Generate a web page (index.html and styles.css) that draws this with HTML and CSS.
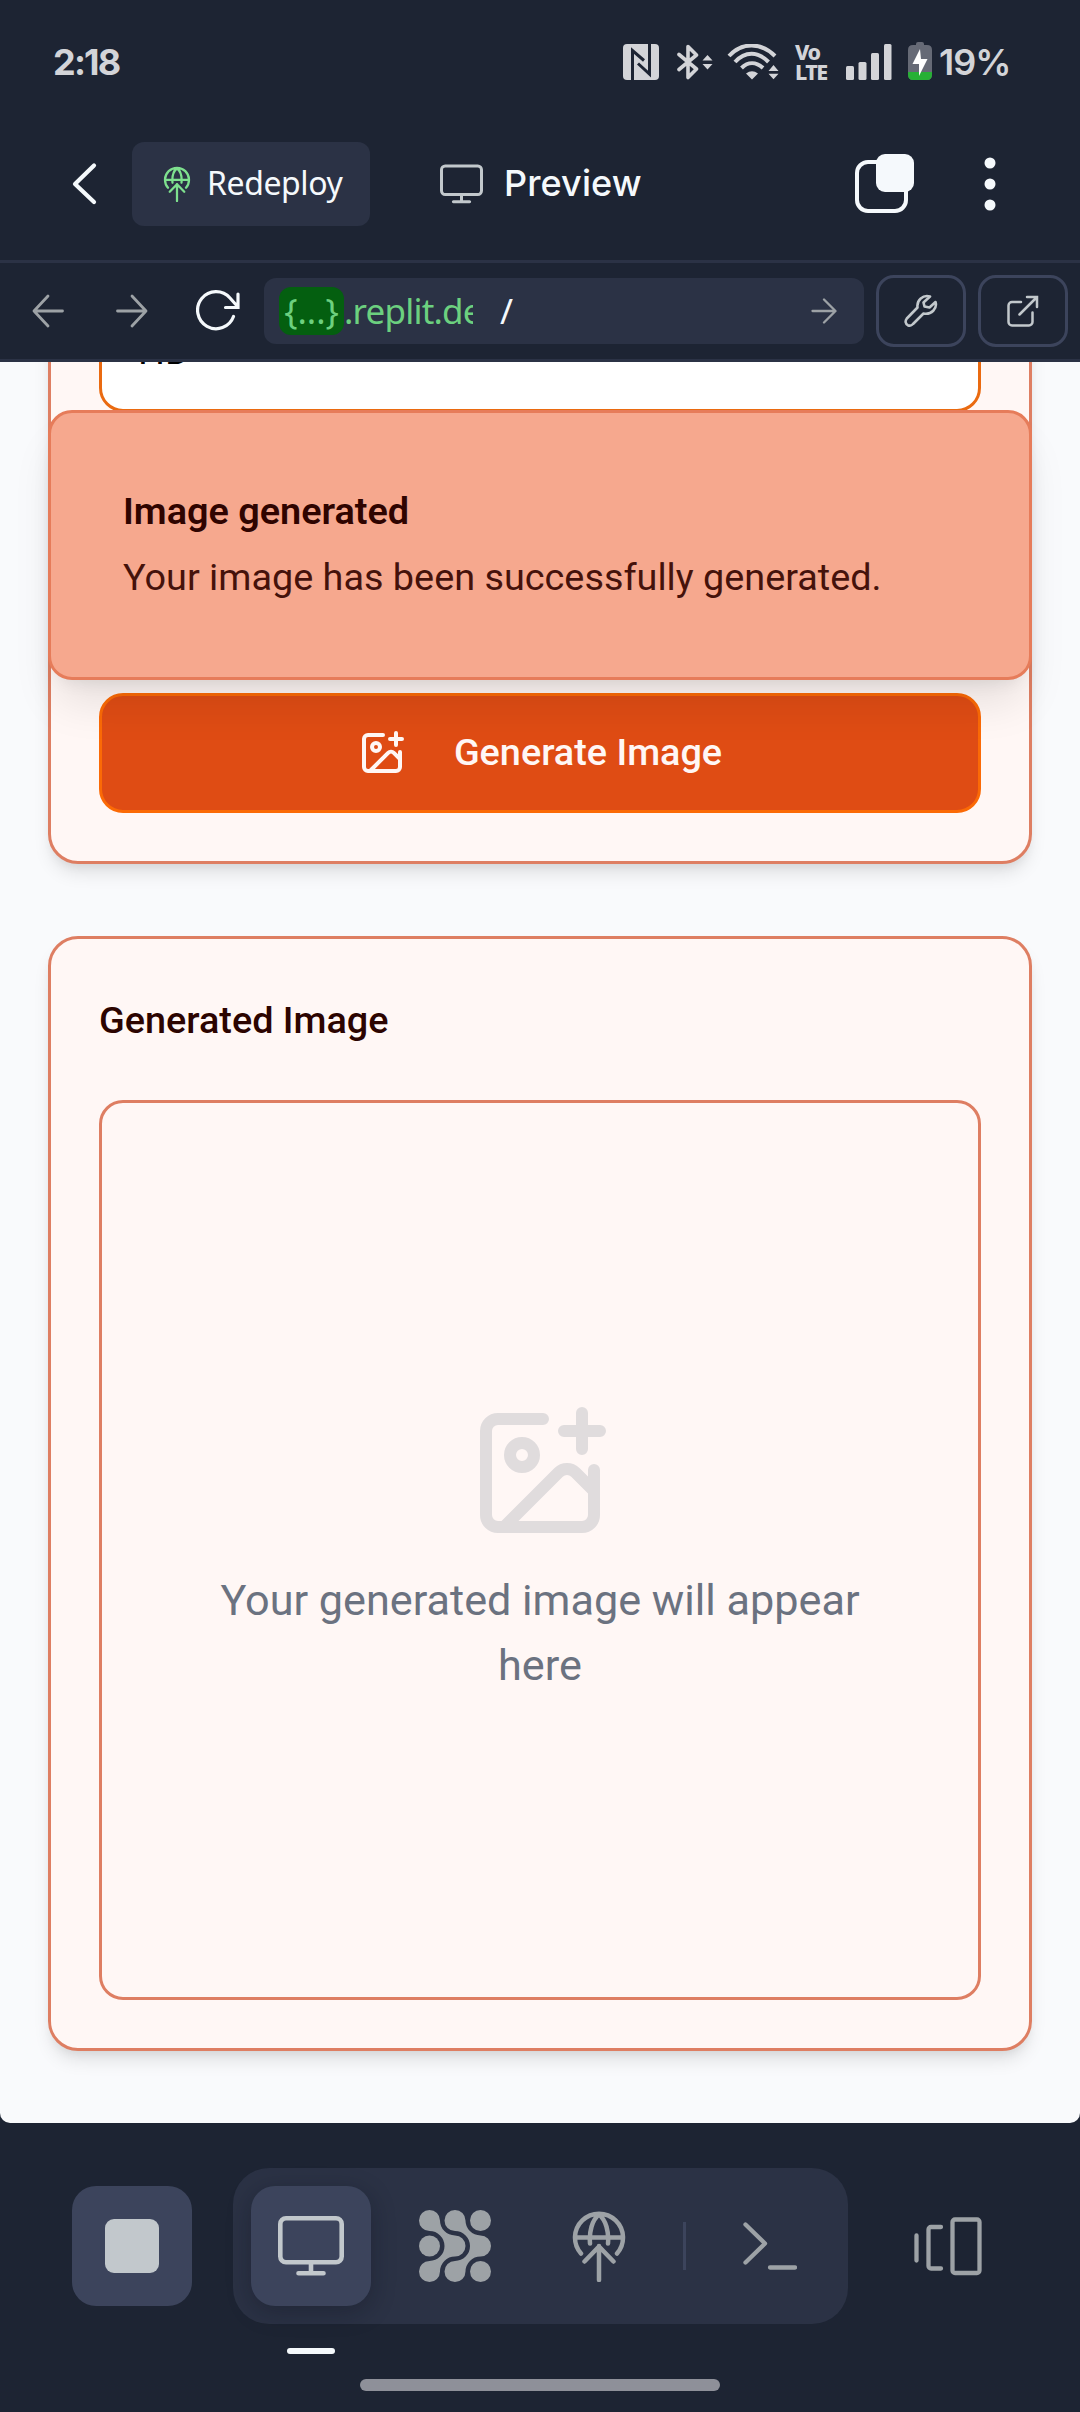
FILE: index.html
```html
<!DOCTYPE html>
<html lang="en">
<head>
<meta charset="utf-8">
<title>Preview</title>
<link rel="stylesheet" href="styles.css">
</head>
<body>
<svg class="defs" width="0" height="0" aria-hidden="true">
  <symbol id="i-globe" viewBox="0 0 72 72">
    <path d="M18 43.5A24 24 0 1 1 54 43.5M12 27.500h48M27 33.500C26 22 29 10 36 4.500C43 10 46 22 45 33.500M36 70V36M21.500 51.500 36 36.500 50.500 51.500" fill="none" stroke="currentColor" stroke-width="4.500" stroke-linecap="round" stroke-linejoin="round"/>
  </symbol>
  <symbol id="i-monitor" viewBox="0 0 66 60">
    <path d="M8 2.300h50a5.700 5.700 0 0 1 5.700 5.700v32.500a5.700 5.700 0 0 1-5.700 5.700H8a5.700 5.700 0 0 1-5.700-5.700V8a5.700 5.700 0 0 1 5.700-5.700zM33 46.500v9M20.500 57.300h25" fill="none" stroke="currentColor" stroke-width="4.600" stroke-linecap="round"/>
  </symbol>
  <symbol id="i-image-plus" viewBox="0 0 24 24">
    <path d="M16 5h6M19 2v6M21 11.500V19a2 2 0 0 1-2 2H5a2 2 0 0 1-2-2V5a2 2 0 0 1 2-2h7.500M21 15l-3.086-3.086a2 2 0 0 0-2.828 0L6 21" fill="none" stroke="currentColor" stroke-width="2" stroke-linecap="round" stroke-linejoin="round"/>
    <circle cx="9" cy="9" r="2" fill="none" stroke="currentColor" stroke-width="2"/>
  </symbol>
</svg>

<header class="status">
  <span class="clock">2:18</span>
  <div class="indicators">
    <svg class="nfc" width="36" height="36" viewBox="0 0 36 36"><rect width="36" height="36" rx="4" fill="#d3d4d8"/><path d="M9.500 36V6.500L21 16.500M26.500 0V30L15 19.500" fill="none" stroke="#1d2433" stroke-width="3"/></svg>
    <svg class="bt" width="36" height="36" viewBox="0 0 36 36"><path d="M2 10.500 19.500 25 11 33.500V2.500L19.500 11 2 25.500" fill="none" stroke="#d3d4d8" stroke-width="3.600" stroke-linejoin="round" stroke-linecap="round"/><path d="M25.500 16.500 30.500 11l5 5.500zM25.500 20h10l-5 5.500z" fill="#d3d4d8"/></svg>
    <svg class="wifi" width="52" height="36" viewBox="0 0 52 36"><path d="M2 12C15-2 34-2 48 12M8 18C18 7 31 7 41.500 18M14.500 24C21 17.500 29 17.500 36 24" fill="none" stroke="#d3d4d8" stroke-width="4"/><path d="M25 35.500 19 29.500Q25 25 31 29.500zM41.500 27 46.500 21l5 6zM41.500 29.700h10l-5 5.500z" fill="#d3d4d8"/></svg>
    <span class="volte"><span>Vo</span><span>LTE</span></span>
    <svg class="signal" width="46" height="36" viewBox="0 0 46 36" fill="#d3d4d8"><rect y="22" width="8" height="14" rx="1.500"/><rect x="12.500" y="18" width="8" height="18" rx="1.500"/><rect x="25" y="9" width="8" height="27" rx="1.500"/><rect x="38" width="7.500" height="36" rx="1.500"/></svg>
    <svg class="battery" width="24" height="38" viewBox="0 0 24 38"><path d="M8 2q0-2 2-2h4q2 0 2 2v1H19q5 0 5 5V32q0 6-5 6H5q-5 0-5-6V8q0-5 5-5h3z" fill="#666a76"/><path d="M0 30H24V32q0 6-5 6H5q-5 0-5-6z" fill="#27b035"/><path d="M12 7 4.500 22H11v12L19.500 17H13z" fill="#fff"/></svg>
    <span class="percent">19%</span>
  </div>
</header>

<nav class="titlebar">
  <svg class="back" width="26" height="44" viewBox="0 0 26 44"><path d="M22 3.500 3 22 22 40" fill="none" stroke="#f5f9fc" stroke-width="4.200" stroke-linecap="round" stroke-linejoin="round"/></svg>
  <button class="redeploy">
    <svg class="globe" width="36" height="36"><use href="#i-globe"/></svg>
    <span>Redeploy</span>
  </button>
  <div class="title">
    <svg width="43" height="40"><use href="#i-monitor"/></svg>
    <span>Preview</span>
  </div>
  <svg class="tabs" width="60" height="60" viewBox="0 0 60 60"><rect x="2" y="8" width="49" height="49" rx="11" fill="none" stroke="#f5f9fc" stroke-width="4"/><rect x="21" y="0" width="38" height="38" rx="9" fill="#f5f9fc"/></svg>
  <svg class="more" width="12" height="54" viewBox="0 0 12 54" fill="#f5f9fc"><circle cx="6" cy="6" r="5.500"/><circle cx="6" cy="27" r="5.500"/><circle cx="6" cy="48" r="5.500"/></svg>
</nav>

<div class="urlbar">
  <svg class="nav-left" width="32" height="34" viewBox="0 0 32 34"><path d="M30.500 17H2M16 2 2 17 16 32" fill="none" stroke="#9da2a6" stroke-width="2.800" stroke-linecap="round" stroke-linejoin="round"/></svg>
  <svg class="nav-right" width="32" height="34" viewBox="0 0 32 34"><path d="M1.500 17H30M16 2 30 17 16 32" fill="none" stroke="#9da2a6" stroke-width="2.800" stroke-linecap="round" stroke-linejoin="round"/></svg>
  <svg class="reload" width="44" height="42" viewBox="0 0 44 42"><path d="M37.500 26.500A18.500 18.500 0 1 1 34 8L42 17M42 4V17.500H29.500" fill="none" stroke="#f5f9fc" stroke-width="3.200" stroke-linecap="round"/></svg>
  <div class="address">
    <span class="host"><span class="chip">{...}</span>.replit.de</span>
    <span class="path">/</span>
    <svg width="26" height="26" viewBox="0 0 26 26"><path d="M1.500 13H24M13 1.500 24.500 13 13 24.500" fill="none" stroke="#9da2a6" stroke-width="2.300" stroke-linecap="round" stroke-linejoin="round"/></svg>
  </div>
  <button class="tool"><svg width="34" height="34" viewBox="0 0 34 34"><path d="M26 2.500C19 .500 12.500 6 13.500 13.500L2.800 24.500C.8 27 1.500 30 3.800 31.200C5.500 32 7.500 31.700 9 30L19.500 19.500C27.500 21 33.500 14.500 31.500 8L25.500 13.500 20.500 12.500 19.500 8.500z" fill="none" stroke="#c2c8cc" stroke-width="2.600" stroke-linejoin="round"/></svg></button>
  <button class="tool"><svg width="32" height="32" viewBox="0 0 32 32"><path d="M14 7H5a3.500 3.500 0 0 0-3.500 3.500V27A3.500 3.500 0 0 0 5 30.500H22a3.500 3.500 0 0 0 3.500-3.500V17.500M12.500 19.500 30 2M20 2H30V12" fill="none" stroke="#c2c8cc" stroke-width="2.500" stroke-linecap="round"/></svg></button>
</div>

<main class="page">
  <section class="card form">
    <div class="select">HD</div>
    <button class="generate">
      <svg width="48" height="48"><use href="#i-image-plus"/></svg>
      <span>Generate Image</span>
    </button>
  </section>
  <section class="card result">
    <h2>Generated Image</h2>
    <div class="placeholder">
      <svg width="144" height="144"><use href="#i-image-plus"/></svg>
      <p>Your generated image will appear here</p>
    </div>
  </section>
  <aside class="toast">
    <strong>Image generated</strong>
    <p>Your image has been successfully generated.</p>
  </aside>
</main>

<footer class="bottom">
  <div class="bar">
    <button class="tile stop"><i></i></button>
    <div class="dock">
      <button class="tile active"><svg width="66" height="60"><use href="#i-monitor"/></svg></button>
      <button class="tile"><svg width="72" height="72" viewBox="0 0 72 72" fill="currentColor"><path id="bone" d="M21 10.500A15 15 0 0 0 36 25.500A10.500 10.500 0 0 1 36 46.500A15 15 0 0 0 21 61.500A10.500 10.500 0 1 1 10.500 51A15 15 0 0 0 10.500 21A10.500 10.500 0 1 1 21 10.500z"/><use href="#bone" x="25.500"/><circle cx="61.500" cy="10.500" r="10.500"/><circle cx="10.500" cy="36" r="10.500"/><circle cx="61.500" cy="61.500" r="10.500"/></svg></button>
      <button class="tile"><svg width="72" height="72"><use href="#i-globe"/></svg></button>
      <span class="divider"></span>
      <button class="tile"><svg width="54" height="48" viewBox="0 0 54 48"><path d="M2.500 2.500 22 21.500 2.500 40.500M27 45.500H52" fill="none" stroke="currentColor" stroke-width="4.300" stroke-linecap="round" stroke-linejoin="round"/></svg></button>
    </div>
    <svg class="panes" width="68" height="60" viewBox="0 0 68 60"><path d="M2.500 19.500V44.500M27 11H17a2.500 2.500 0 0 0-2.500 2.500V50a2.500 2.500 0 0 0 2.500 2.500H27M41 3.500H63a2.500 2.500 0 0 1 2.500 2.500V54.500a2.500 2.500 0 0 1-2.500 2.500H41a2.500 2.500 0 0 1-2.500-2.500V6a2.500 2.500 0 0 1 2.500-2.500z" fill="none" stroke="#9da2a6" stroke-width="4.300" stroke-linecap="round"/></svg>
  </div>
  <span class="marker"></span>
  <span class="home"></span>
</footer>
</body>
</html>
```
FILE: styles.css
```css
* { box-sizing: border-box; }
body {
  margin: 0;
  width: 1080px;
  height: 2412px;
  overflow: hidden;
  display: flex;
  flex-direction: column;
  background: #1d2433;
  color: #f5f9fc;
  font-family: Roboto, sans-serif;
}
.defs { display: none; }
button { border: 0; padding: 0; margin: 0; background: none; color: inherit; font: inherit; display: flex; align-items: center; }
svg { display: block; flex: none; }
h2, p { margin: 0; }

/* system status bar */
.status {
  height: 124px;
  padding: 0 70px 0 53px;
  display: flex;
  align-items: center;
  justify-content: space-between;
  color: #d3d4d8;
  font: 600 36px Inter, sans-serif;
}
.clock { font-weight: 700; letter-spacing: -1.8px; }
.indicators { display: flex; align-items: center; }
.bt { margin-left: 18px; }
.wifi { margin-left: 14px; }
.volte {
  margin-left: 16px;
  width: 34px;
  display: flex;
  flex-direction: column;
  font: 800 21.5px/20px "Noto Sans", sans-serif;
  letter-spacing: -1.6px;
}
.signal { margin-left: 17px; }
.battery { margin: -2px 0 0 16px; }
.percent { margin-left: 7px; width: 71px; letter-spacing: -1px; }

/* workspace title bar */
.titlebar {
  height: 139px;
  border-bottom: 3px solid #2b3245;
  display: flex;
  align-items: center;
  padding: 0 84px 16px 72px;
}
.redeploy {
  margin-left: 34px;
  width: 238px;
  height: 84px;
  border-radius: 12px;
  background: #2b3245;
  padding-left: 27px;
  font: 400 32px "Noto Sans", sans-serif;
}
.globe { color: #7ee08e; }
.redeploy span { margin-left: 12px; padding-bottom: 3px; letter-spacing: -.4px; }
.title { margin-left: 70px; display: flex; align-items: center; font: 500 36px Inter, sans-serif; }
.title svg { color: #c2c8cc; }
.title span { margin-left: 21px; padding-bottom: 2px; letter-spacing: .1px; }
.tabs { margin-left: auto; }
.more { margin-left: 69px; }

/* browser controls */
.urlbar {
  height: 99px;
  border-bottom: 3px solid #2b3245;
  display: flex;
  align-items: center;
  padding: 0 12px 0 32px;
}
.nav-right { margin-left: 52px; }
.reload { margin-left: 48px; }
.address {
  margin-left: 24px;
  width: 600px;
  height: 66px;
  border-radius: 12px;
  background: #2b3245;
  display: flex;
  align-items: center;
  padding: 0 27px 0 15px;
  font: 400 35px/48px "Noto Sans", sans-serif;
}
.host { width: 194px; overflow: hidden; white-space: nowrap; color: #6cd07f; letter-spacing: -.8px; }
.chip { display: inline-block; width: 65px; text-align: center; border-radius: 12px; background: #045f10; letter-spacing: 0; }
.path { margin-left: 27px; }
.address svg { margin-left: auto; }
.tool {
  margin-left: 12px;
  width: 90px;
  height: 72px;
  border: 3px solid #3c445c;
  border-radius: 18px;
  justify-content: center;
}

/* previewed page */
.page {
  position: relative;
  height: 1761px;
  overflow: hidden;
  display: flex;
  flex-direction: column;
  justify-content: flex-end;
  gap: 72px;
  padding: 0 48px 72px;
  background: #f9fafc;
  border-radius: 0 0 10px 10px;
}
.card {
  border: 3px solid #de7e62;
  border-radius: 30px;
  padding: 48px;
  background: #fff7f5;
  box-shadow: 0 12px 18px -3px rgba(0, 0, 0, .1), 0 6px 12px -6px rgba(0, 0, 0, .1);
}
.form { flex: none; display: flex; flex-direction: column; gap: 281px; }
.select {
  height: 120px;
  border: 3px solid #ea6a10;
  border-radius: 24px;
  background: #fff;
  color: #000;
  padding-left: 36px;
  font-size: 37.8px;
  line-height: 113px;
}
.generate {
  height: 120px;
  border: 3px solid #fb6a06;
  border-radius: 24px;
  background: #df4c14;
  color: #fff7f5;
  justify-content: center;
  gap: 48px;
  font-size: 37.8px;
  font-weight: 500;
}
.generate span { padding-bottom: 2px; }
.result { flex: none; height: 1115px; display: flex; flex-direction: column; justify-content: space-between; padding-top: 54px; }
.result h2 { color: #2c0400; font-size: 37.8px; line-height: 54px; font-weight: 500; }
.placeholder {
  height: 900px;
  border: 3px solid #de7e62;
  border-radius: 24px;
  display: flex;
  flex-direction: column;
  align-items: center;
  justify-content: center;
  gap: 24px;
  padding: 0 96px;
  color: #e0dcdd;
}
.placeholder p { margin-top: -1px; padding-bottom: 1px; text-align: center; color: #6b7280; font-size: 43.2px; line-height: 65px; }
.toast {
  position: absolute;
  left: 48px;
  top: 48px;
  width: 984px;
  height: 270px;
  border: 3px solid #e67c5a;
  border-radius: 24px;
  background: #f6a88e;
  padding: 71px 72px;
  color: #2f0400;
  font-size: 37.8px;
  line-height: 54px;
  box-shadow: 0 30px 45px -9px rgba(0, 0, 0, .1), 0 12px 18px -12px rgba(0, 0, 0, .1);
}
.toast strong { display: block; font-weight: 600; }
.toast p { margin-top: 12px; color: #45120b; }

/* bottom tool switcher */
.bottom { height: 289px; display: flex; flex-direction: column; }
.bar { margin-top: 45px; height: 156px; padding: 0 98px 0 72px; display: flex; align-items: center; }
.tile { width: 120px; height: 120px; border-radius: 24px; justify-content: center; color: #9da2a6; }
.stop, .active { background: #3c445c; color: #c2c8cc; }
.stop i { width: 54px; height: 54px; border-radius: 9px; background: #c2c8cc; }
.dock {
  margin-left: 41px;
  width: 615px;
  height: 156px;
  padding: 0 18px;
  border-radius: 36px;
  background: #2b3245;
  display: flex;
  align-items: center;
  gap: 24px;
}
.active { box-shadow: 0 6px 24px rgba(10, 14, 24, .3); }
.divider { width: 3px; height: 48px; background: #3c445c; }
.panes { margin-left: auto; }
.marker { margin: 24px 0 0 287px; width: 48px; height: 6px; border-radius: 3px; background: #f5f9fc; }
.home { margin: 25px auto 0; width: 360px; height: 12px; border-radius: 6px; background: #8e9099; }
```
